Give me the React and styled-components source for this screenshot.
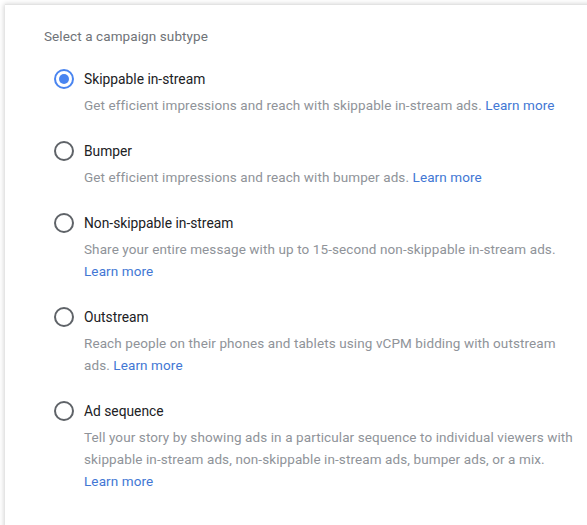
import styled, { createGlobalStyle } from 'styled-components'

const GlobalStyle = createGlobalStyle`
  html, body {
    margin: 0;
    padding: 0;
    background: #fff;
    font-family: Roboto, "Liberation Sans", Arial, sans-serif;
    -webkit-font-smoothing: antialiased;
  }
`

const Page = styled.div`
  height: 525px;
  overflow: hidden;
  padding: 4px 0 0 5px;
  box-sizing: border-box;
`

const Card = styled.div`
  min-height: 600px;
  margin-right: -20px;
  background: #fff;
  border-top: 1px solid #e3e3e3;
  box-shadow: -1px 0 5px rgba(0, 0, 0, 0.18);
  padding: 21px 24px 0 39px;
`

const Heading = styled.div`
  font-size: 13.5px;
  line-height: 20px;
  color: #6f7378;
  letter-spacing: 0.1px;
  margin-bottom: 22px;
`

const Options = styled.div`
  display: flex;
  flex-direction: column;
  gap: 24px;
  padding-left: 10px;
`

const Option = styled.label`
  display: grid;
  grid-template-columns: 20px 1fr;
  column-gap: 10px;
  cursor: pointer;
`

const Radio = styled.span`
  width: 20px;
  height: 20px;
  margin-top: 1px;
  box-sizing: border-box;
  border-radius: 50%;
  border: 2px solid ${(props) => (props.checked ? '#4a85f0' : '#5f6368')};
  display: flex;
  align-items: center;
  justify-content: center;

  &::after {
    content: '';
    width: 10px;
    height: 10px;
    border-radius: 50%;
    background: #4a85f0;
    display: ${(props) => (props.checked ? 'block' : 'none')};
  }
`

const Texts = styled.div`
  display: flex;
  flex-direction: column;
  gap: 4px;
`

const Label = styled.div`
  font-size: 13.8px;
  line-height: 22px;
  color: #202124;
`

const Description = styled.div`
  font-size: 13.5px;
  line-height: 22px;
  color: #8f9399;
  letter-spacing: 0.1px;
`

const LearnMore = styled.a`
  color: #4277d4;
  text-decoration: none;
  white-space: nowrap;
`

const subtypes = [
  {
    label: 'Skippable in-stream',
    text: 'Get efficient impressions and reach with skippable in-stream ads.',
    checked: true,
  },
  {
    label: 'Bumper',
    text: 'Get efficient impressions and reach with bumper ads.',
  },
  {
    label: 'Non-skippable in-stream',
    text: 'Share your entire message with up to 15-second non-skippable in-stream ads.',
  },
  {
    label: 'Outstream',
    text: 'Reach people on their phones and tablets using vCPM bidding with outstream ads.',
  },
  {
    label: 'Ad sequence',
    text: 'Tell your story by showing ads in a particular sequence to individual viewers with skippable in-stream ads, non-skippable in-stream ads, bumper ads, or a mix.',
  },
]

export default function App() {
  return (
    <>
      <GlobalStyle />
      <Page>
        <Card>
          <Heading>Select a campaign subtype</Heading>
          <Options>
            {subtypes.map((item) => (
              <Option key={item.label}>
                <Radio checked={item.checked} />
                <Texts>
                  <Label>{item.label}</Label>
                  <Description>
                    {item.text} <LearnMore href="#">Learn more</LearnMore>
                  </Description>
                </Texts>
              </Option>
            ))}
          </Options>
        </Card>
      </Page>
    </>
  )
}
